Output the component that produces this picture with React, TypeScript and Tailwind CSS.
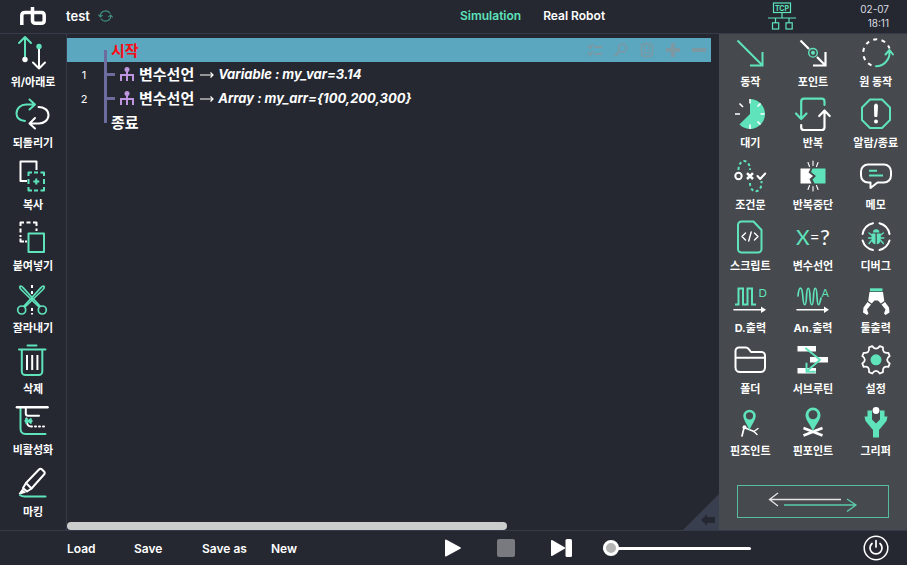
import type { ReactNode } from 'react';

const GREEN = '#5fe3bb';
const WHITE = '#ffffff';

type Item = { label: string; icon: ReactNode };

function gearPath(cx: number, cy: number, teeth: number) {
  const point = (radius: number, degrees: number) => {
    const angle = (degrees * Math.PI) / 180;
    return `${(cx + radius * Math.cos(angle)).toFixed(2)} ${(cy + radius * Math.sin(angle)).toFixed(2)}`;
  };
  const step = 360 / teeth;
  let path = `M${point(14.2, step / 2 - 7)}`;
  for (let i = 0; i < teeth; i += 1) {
    const peak = step / 2 + i * step;
    path += `L${point(14.2, peak + 7)}Q${point(8.6, peak + step / 2)} ${point(14.2, peak + step - 7)}`;
  }
  return `${path}Z`;
}

function Glyph({ children }: { children: ReactNode }) {
  return (
    <svg
      width="40"
      height="40"
      viewBox="0 0 40 40"
      fill="none"
      stroke={WHITE}
      strokeWidth="2"
      strokeLinecap="round"
      strokeLinejoin="round"
      aria-hidden="true"
    >
      {children}
    </svg>
  );
}

const editTools: Item[] = [
  {
    label: '위/아래로',
    icon: (
      <>
        <path d="M12 25V3M6 9l6-6 6 6" stroke={GREEN} />
        <circle cx="12" cy="25.5" r="2.7" fill={WHITE} stroke="none" />
        <path d="M26 13v21M20 28.500l6 6 6-6" />
        <circle cx="26" cy="12.500" r="2.700" fill={GREEN} stroke="none" />
      </>
    ),
  },
  {
    label: '되돌리기',
    icon: (
      <>
        <path d="M12 26C6 26 3.500 22 3.500 18.500C3.500 13 8 9.500 13 9.500H21.500M16.500 4.500l5.500 5-5.500 5" stroke={GREEN} />
        <path d="M25.500 12C31 12 35.500 15 35.500 20C35.500 25 31 28.500 26 28.500H17M22 23l-5.500 5.500 5.500 5" />
      </>
    ),
  },
  {
    label: '복사',
    icon: (
      <>
        <path d="M14 24H7.500V4.500H23.500V13" strokeLinecap="butt" />
        <path
          d="M15.500 19V15.500H19M21 15.500h4M27.500 15.500H31V19M31 22v5M31 30v3.500H27.500M25 33.500h-4M19 33.500H15.500V30M15.500 27v-5"
          stroke={GREEN}
          strokeLinecap="butt"
        />
        <path d="M23.300 21.500v6M20.300 24.500h6" stroke={GREEN} strokeLinecap="butt" />
      </>
    ),
  },
  {
    label: '붙여넣기',
    icon: (
      <>
        <path
          d="M7.500 8V4.500H11M13.500 4.500h4M20 4.500H23.500V8M23.500 10.500V13M7.500 10.500v4M7.500 17v2M7.500 20.500V23.500H11M12 23.500h2"
          strokeLinecap="butt"
        />
        <rect x="15.500" y="15.500" width="15.500" height="18.500" stroke={GREEN} />
      </>
    ),
  },
  {
    label: '잘라내기',
    icon: (
      <>
        <path d="M19 5v3M19 11v3M19 28v3M19 33v1.500" strokeLinecap="butt" />
        <g stroke={GREEN} strokeWidth="1.700">
          <path d="M26 27L8 9.500C6.500 8 6.500 6 7.500 6C9 6 9.500 7 10.500 8.200L20.500 19L27 26" />
          <path d="M12 27L30 9.500C31.500 8 31.500 6 30.500 6C29 6 28.500 7 27.500 8.200L17.500 19L11 26" />
          <circle cx="8.700" cy="30" r="4" />
          <circle cx="29.300" cy="30" r="4" />
        </g>
      </>
    ),
  },
  {
    label: '삭제',
    icon: (
      <>
        <path d="M14.500 4.500h9M6 8.500h26.500M8.800 9v21.500a3.500 3.500 0 0 0 3.500 3.500h13.500a3.500 3.500 0 0 0 3.500-3.500V9" stroke={GREEN} />
        <path d="M14 14v15M19.200 14v15M24.400 14v15" strokeLinecap="butt" />
      </>
    ),
  },
  {
    label: '비활성화',
    icon: (
      <>
        <path d="M7.500 6v20.500c0 3.500 2 5.500 5 5.500H32.500" stroke={GREEN} />
        <path d="M4 5.200h30.500" strokeWidth="2.600" />
        <path d="M12.800 6v5.500c0 1.500 1 2.300 2.300 2.300H26" />
        <path d="M13.500 16.500c.5 5 .5 8 4.500 8h1M22 24.500h1M26 24.500h1M30 24.500h1" />
        <path d="M12.500 16.500l6 5M18.500 16.500l-6 5M11.500 19h8" stroke={GREEN} strokeLinecap="butt" />
      </>
    ),
  },
  {
    label: '마킹',
    icon: (
      <>
        <path d="M13 19L26 5.500c1-1 2-1 3 0l2 2c1 1 1 2 0 3L18.500 24.500z" />
        <path d="M13 19l-3 5 4 3.500 4.500-3" />
        <path d="M9.500 25l-3.500 5 6-1.500z" fill={WHITE} strokeWidth="1" />
        <path d="M7 31c1.500 1.200 2.500 1.500 4.500 1.500H32.500" stroke={GREEN} />
      </>
    ),
  },
];

const commands: Item[] = [
  {
    label: '동작',
    icon: <path d="M7.500 6.500L32.500 31.500M20 31.500H32.500V18" stroke={GREEN} strokeLinecap="butt" strokeLinejoin="miter" />,
  },
  {
    label: '포인트',
    icon: (
      <>
        <path d="M7.500 6.500L16 15M24 23l8.500 8.500M20 31.500H32.500V18" strokeWidth="2.200" strokeLinecap="butt" strokeLinejoin="miter" />
        <circle cx="20" cy="18.800" r="4.300" stroke={GREEN} strokeWidth="1.400" />
        <circle cx="20" cy="18.800" r="2" fill={GREEN} stroke="none" />
      </>
    ),
  },
  {
    label: '원 동작',
    icon: (
      <>
        <path d="M15.500 31.300A13.500 13.500 0 1 1 33.500 14.500" strokeDasharray="4 4.300" strokeLinecap="butt" />
        <path d="M20 32.200A13.500 13.500 0 0 0 33.500 18M29.500 20.500l4-4.500 3.500 4.500" stroke={GREEN} />
      </>
    ),
  },
  {
    label: '대기',
    icon: (
      <>
        <path d="M20 19V4A15 15 0 1 1 9.400 29.600z" fill={GREEN} stroke="none" />
        <g strokeWidth="1.600" strokeLinecap="butt">
          <path d="M5 19h5M9.500 8.500l3.500 3.500M20 4v4.500M20 34v-4.500" />
          <path d="M34.500 19h-4M30.500 8.500l-3 3M30.500 29.500l-3-3" />
        </g>
      </>
    ),
  },
  {
    label: '반복',
    icon: (
      <>
        <path d="M31.500 10V6.500c0-1.800-1-2.800-2.800-2.800H11c-1.800 0-2.800 1-2.800 2.800V23.500M3 18.500l5.200 5.500 5.300-5.500" stroke={GREEN} strokeWidth="2.200" />
        <path d="M8.200 30v2.200c0 1.800 1 2.800 2.800 2.800H28.700c1.800 0 2.800-1 2.800-2.800V15.500M26.200 21l5.300-5.500 5.200 5.500" strokeWidth="2.200" />
      </>
    ),
  },
  {
    label: '알람/종료',
    icon: (
      <>
        <path d="M14 4.500H26L34 12.500V25L26 33H14L6 25V12.500z" stroke={GREEN} />
        <path d="M18.500 10.500c0-2 3-2 3 0l-.6 11h-1.800z" fill={WHITE} strokeWidth="1" />
        <circle cx="20" cy="26.500" r="2" fill={WHITE} stroke="none" />
      </>
    ),
  },
  {
    label: '조건문',
    icon: (
      <>
        <path d="M8.500 13C8.500 1 20 1 20 13M20 26C20 37 31.500 37 31.500 26V24" stroke={GREEN} strokeDasharray="3 2.500" strokeLinecap="butt" />
        <circle cx="8.500" cy="19" r="3.200" />
        <path d="M17 16.200l6 5.800M23 16.200L17 22" strokeWidth="2.500" strokeLinecap="butt" />
        <path d="M27.500 19l2.700 3 5-5.500" />
      </>
    ),
  },
  {
    label: '반복중단',
    icon: (
      <>
        <path d="M7.500 11.500H17.500l-2 4 4.500 3.500-3.500 3 2 4.500H7.500z" fill={WHITE} stroke="none" />
        <path d="M32.500 11.500H19.500l-1.500 3.500 5 4-3.500 3.500 2 4H32.500z" fill={GREEN} stroke="none" />
        <path d="M15 5.500l1.500 4M20 4v4.500M25 5.500l-1.500 4M15 32.500l1.500-4M20 34v-4.500M25 32.500l-1.500-4" strokeWidth="1.100" />
      </>
    ),
  },
  {
    label: '메모',
    icon: (
      <>
        <path d="M12 7.500H28a7 7 0 0 1 7 7v4a7 7 0 0 1-7 7H21.500L14.500 31V25.500H12a7 7 0 0 1-7-7v-4a7 7 0 0 1 7-7z" />
        <path d="M13 13.800h8M13 18.500h14" stroke={GREEN} strokeLinecap="butt" />
      </>
    ),
  },
  {
    label: '스크립트',
    icon: (
      <>
        <path d="M11.500 3.500H23.500L31.500 12V31a3.500 3.500 0 0 1-3.500 3.500H11.500A3.500 3.500 0 0 1 8 31V7a3.500 3.500 0 0 1 3.500-3.500z" stroke={GREEN} />
        <path d="M15.500 15L12 18.500l3.500 3.500M24.500 15L28 18.500l-3.500 3.500M21.200 14l-2.500 9" strokeWidth="1.400" />
      </>
    ),
  },
  {
    label: '변수선언',
    icon: (
      <g stroke="none" fontFamily="Lato, sans-serif" fontWeight="400">
        <text x="3" y="26.500" fill={GREEN} fontSize="21">X</text>
        <text x="17" y="25" fill={WHITE} fontSize="16">=</text>
        <text x="27" y="26.500" fill={WHITE} fontSize="22">?</text>
      </g>
    ),
  },
  {
    label: '디버그',
    icon: (
      <>
        <path d="M6.600 16A13.800 13.800 0 0 1 17 5.300M23.500 5.300A13.800 13.800 0 0 1 33.500 16M33.500 22.500A13.800 13.800 0 0 1 23.500 32M17 32A13.800 13.800 0 0 1 6.600 22.500" />
        <path d="M17 14.500a3.200 3.200 0 0 1 6.400 0z" fill={GREEN} stroke="none" />
        <path d="M15.500 15.500h4v10.800c-3-.6-4-2.300-4-4.800zM20.800 15.500h4v6c0 2.500-1 4.200-4 4.800z" fill={GREEN} stroke="none" />
        <path d="M15.500 17l-2.500-2M15.500 20h-3M15.500 22.500l-2.500 3M24.800 17l2.500-2M24.800 20h3M24.800 22.500l2.500 3" stroke={GREEN} strokeWidth="1.400" />
      </>
    ),
  },
  {
    label: 'D.출력',
    icon: (
      <>
        <path d="M5 24.500H8.500V8.500H13V24.500H17.500V8.500H22V24.500H26" stroke={GREEN} strokeLinecap="butt" strokeLinejoin="miter" />
        <text x="28.500" y="16.500" fill={GREEN} stroke="none" fontFamily="Lato, sans-serif" fontSize="11" fontWeight="400">D</text>
        <path d="M4 29.800h27" strokeWidth="1.600" />
        <path d="M31 26.500l5 3.300-5 3.300z" fill={WHITE} stroke="none" />
      </>
    ),
  },
  {
    label: 'An.출력',
    icon: (
      <>
        <path
          d="M5 16C6 5.500 9 5.500 9.800 16.500S13 27.500 13.500 16.500S16.500 5.500 17 16.500S20 27.500 20.500 16.500S23.500 5.500 24 16.500S26 27 28 18"
          stroke={GREEN}
          strokeWidth="1.700"
        />
        <text x="28.500" y="16.500" fill={GREEN} stroke="none" fontFamily="Lato, sans-serif" fontSize="11" fontWeight="400">A</text>
        <path d="M4 29.800h27" strokeWidth="1.600" />
        <path d="M31 26.500l5 3.300-5 3.300z" fill={WHITE} stroke="none" />
      </>
    ),
  },
  {
    label: '툴출력',
    icon: (
      <>
        <path d="M14 8.300h12.500v3H14z" fill={GREEN} stroke="none" />
        <path d="M13.500 12h13.500l1.300 9-3.500 2.500-2.800-3h-3.500l-2.800 3-3.500-2.500z" fill={WHITE} stroke="none" />
        <path
          d="M11.500 22l3.500 2.500-4 5 1.500 4-1.500 1.500-4-2.500.5-5zM29 22l-3.500 2.500 4 5-1.500 4 1.500 1.500 4-2.500-.5-5z"
          fill={WHITE}
          stroke="none"
        />
      </>
    ),
  },
  {
    label: '폴더',
    icon: (
      <>
        <path d="M5.500 26.500V10a3.500 3.500 0 0 1 3.500-3.500h6.500c1.500 0 2.500.5 3.500 1.800l2 2.700H31.500a3.500 3.500 0 0 1 3.500 3.500V26.500a4.500 4.500 0 0 1-4.500 4.500H10a4.500 4.500 0 0 1-4.500-4.500z" />
        <path d="M6 16.800H34.500" />
      </>
    ),
  },
  {
    label: '서브루틴',
    icon: (
      <>
        <path d="M4.500 5h18.500v5.500H4.500zM17 16h18v5.500H17zM4.500 27h18.500v5.500H4.500z" fill={WHITE} stroke="none" />
        <path d="M13 7.500L27 18.800L13.500 30.500M13.500 22.500V30.800H22" stroke={GREEN} />
      </>
    ),
  },
  {
    label: '설정',
    icon: (
      <>
        <path d={gearPath(20, 18.8, 8)} strokeWidth="1.800" />
        <circle cx="20" cy="18.800" r="5.500" fill={GREEN} stroke="none" />
      </>
    ),
  },
  {
    label: '핀조인트',
    icon: (
      <>
        <path d="M12 33l2-8M14 24.500l10 4" strokeWidth="1.700" />
        <path d="M24 28.500l4-3M24 28.500l3 3" strokeWidth="1.400" />
        <circle cx="14.500" cy="24.300" r="2" fill={WHITE} stroke="none" />
        <path
          d="M19.500 27.500C18 22.500 13.300 17 13.300 13a6.200 6.200 0 0 1 12.400 0C25.700 17 21 22.500 19.500 27.500zM19.500 9.200a3.600 3.600 0 1 0 0 7.200 3.600 3.600 0 0 0 0-7.200z"
          fill={GREEN}
          fillRule="evenodd"
          stroke="none"
        />
      </>
    ),
  },
  {
    label: '핀포인트',
    icon: (
      <>
        <path d="M10.500 25l19 7.500M29.500 25l-19 7.500" strokeWidth="2.600" strokeLinecap="butt" />
        <path
          d="M20 28.500C18.500 23 12.500 17.500 12.500 12a7.500 7.500 0 0 1 15 0C27.500 17.500 21.500 23 20 28.500zM20 7.200a4.500 4.500 0 1 0 0 9 4.500 4.500 0 0 0 0-9z"
          fill={GREEN}
          fillRule="evenodd"
          stroke="none"
        />
      </>
    ),
  },
  {
    label: '그리퍼',
    icon: (
      <>
        <path
          d="M11.500 7.500h4.500v9l4 4 4-4v-9h4.500v6h3l-1 4.500-7.500 9v7.500h-6V27l-7.500-9-1-4.500h3z"
          fill={GREEN}
          stroke="none"
        />
        <circle cx="20" cy="7.500" r="3.400" fill={WHITE} stroke="none" />
      </>
    ),
  },
];

function ToolButton({ item }: { item: Item }) {
  return (
    <button type="button" className="flex min-h-0 min-w-0 flex-1 flex-col items-center gap-px text-[11px] leading-[14px] font-bold">
      <Glyph>{item.icon}</Glyph>
      <span className="whitespace-nowrap">{item.label}</span>
    </button>
  );
}

function Header() {
  return (
    <header className="flex h-[34px] shrink-0 items-center border-b border-[#363b4a] pb-0.5">
      <div className="flex w-[66px] justify-center">
        <svg width="26" height="20" viewBox="0 0 26 20" fill="none" stroke={WHITE} strokeWidth="3.500" role="img" aria-label="rb">
          <path d="M1.800 19V9.500Q1.800 6.500 5 6.500H12.500V14.500Q12.500 17.200 15.500 17.200H21.500Q24.200 17.200 24.200 14.500V9.500Q24.200 6.500 21.500 6.500H12.500V1" />
        </svg>
      </div>
      <div className="flex w-[394px] items-center gap-2">
        <h1 className="text-[13px] leading-4 font-semibold">test</h1>
        <button type="button" aria-label="refresh">
          <svg width="15" height="14" viewBox="0 0 15 14" fill="none" stroke="#42917f" strokeWidth="1.200" strokeLinecap="round">
            <path d="M2.300 7.500A5.300 5.300 0 0 1 11.800 4M12.700 6.500A5.300 5.300 0 0 1 3.200 10M.7 6l1.600 2 2-1.600M14.300 8l-1.600-2-2 1.600" />
          </svg>
        </button>
      </div>
      <nav className="flex gap-[22px] text-[12px] leading-4 font-semibold">
        <button type="button" className="text-[#5fe3bb]">Simulation</button>
        <button type="button">Real Robot</button>
      </nav>
      <div className="ml-auto flex items-center pr-[18px]">
        <svg width="28" height="28" viewBox="0 0 28 28" fill="none" stroke={GREEN} strokeWidth="1.200">
          <rect x="5.500" y="1" width="17" height="9.500" />
          <text x="14" y="8.600" textAnchor="middle" fill={GREEN} stroke="none" fontFamily="Inter, sans-serif" fontSize="7" fontWeight="700">TCP</text>
          <path d="M14 10.500V16M0 16h28M7.500 16v5M21 16v5" />
          <rect x="4.500" y="20.800" width="6.200" height="6.200" />
          <rect x="18" y="20.800" width="6.200" height="6.200" />
        </svg>
        <div className="w-[93px] text-right text-[10px] leading-[14px] text-[#dcdde0]">
          <div>02-07</div>
          <div>18:11</div>
        </div>
      </div>
    </header>
  );
}

function RowTools() {
  const shape = 'h-[14px] w-[14px]';
  return (
    <div className="ml-auto flex gap-3 pr-[5px] pb-px text-[#7b98a3]">
      <button type="button" aria-label="select">
        <svg className={shape} viewBox="0 0 14 14" fill="none" stroke="currentColor" strokeWidth="2">
          <path d="M0 3l2 2 3-4M0 10l2 2 3-4M6.500 4H14M6.500 11H14" />
        </svg>
      </button>
      <button type="button" aria-label="search">
        <svg className={shape} viewBox="0 0 14 14" fill="none" stroke="currentColor" strokeWidth="1.600">
          <circle cx="8.500" cy="5" r="4" />
          <path d="M5.500 8L1 13" strokeWidth="2.200" />
        </svg>
      </button>
      <button type="button" aria-label="info">
        <svg className={shape} viewBox="0 0 14 14" fill="none" stroke="currentColor" strokeWidth="1.500">
          <rect x="1.500" y=".8" width="11" height="12.500" rx="3" />
          <path d="M4 4h2M8 4h2M4 7h2M8 7h2M4 10h6" />
        </svg>
      </button>
      <button type="button" aria-label="expand">
        <svg className={shape} viewBox="0 0 14 14" stroke="currentColor" strokeWidth="4">
          <path d="M7 0v14M0 7h14" />
        </svg>
      </button>
      <button type="button" aria-label="collapse">
        <svg className={shape} viewBox="0 0 14 14" stroke="currentColor" strokeWidth="4">
          <path d="M0 7h14" />
        </svg>
      </button>
    </div>
  );
}

function VariableRow({ line, value }: { line: number; value: string }) {
  return (
    <li className="flex h-6 items-center">
      <span className="mr-[3px] w-[34px] pt-0.5 text-center text-[11px]">{line}</span>
      <span className="h-6 w-[3px] bg-[#6c6c9e]" />
      <span className="mr-[5px] h-[3px] w-2 bg-[#6c6c9e]" />
      <svg width="14" height="14" viewBox="0 0 14 14" fill="none" stroke="#bf95df" strokeWidth="2">
        <circle cx="7" cy="2.500" r="2.500" fill="#bf95df" stroke="none" />
        <path d="M7 3v11M1 14V8H13V14" />
      </svg>
      <span className="ml-[5px] pt-0.5 text-[15px] font-semibold">변수선언</span>
      <svg className="mr-1 ml-[6px]" width="14" height="8" viewBox="0 0 14 8" fill="none" stroke={WHITE} strokeWidth="1.200">
        <path d="M0 5h13M10.500 2.500L13 5l-2.500 2.500" />
      </svg>
      <em className="pt-0.5 text-[13px] font-bold">{value}</em>
    </li>
  );
}

function Program() {
  return (
    <main className="relative flex min-w-0 flex-1 flex-col pt-1">
      <ol className="mr-2 flex-1">
        <li className="flex h-6 items-center bg-[#5aa7bf]">
          <span className="ml-[37px] h-3 w-[3px] self-end bg-[#6c6c9e]" />
          <span className="ml-1 pt-0.5 text-[15px] font-semibold text-[#ff0a14]">시작</span>
          <RowTools />
        </li>
        <VariableRow line={1} value="Variable : my_var=3.14" />
        <VariableRow line={2} value="Array : my_arr={100,200,300}" />
        <li className="flex h-6 items-center">
          <span className="ml-[37px] h-[13px] w-[3px] self-start bg-[#6c6c9e]" />
          <span className="ml-1 pt-0.5 text-[15px] font-semibold">종료</span>
        </li>
      </ol>
      <div className="mr-2 h-2">
        <div className="h-2 w-[68.4%] rounded-full bg-[#cbcccc]" />
      </div>
      <button
        type="button"
        aria-label="back"
        className="absolute right-0 bottom-0 flex h-9 w-9 items-end justify-end bg-[#3a3f4f] pr-1 pb-1 [clip-path:polygon(100%_0,100%_100%,0_100%)]"
      >
        <svg width="14" height="12" viewBox="0 0 14 12" fill="#252831">
          <path d="M0 6l6-6v3h8v6H6v3z" />
        </svg>
      </button>
    </main>
  );
}

function Footer() {
  return (
    <footer className="flex h-[35px] shrink-0 items-center border-t border-[#363b4a] pl-[67px] pr-[18px]">
      <nav className="flex w-[378px] pt-px text-left text-[12px] leading-4 font-semibold">
        <button type="button" className="w-[67px] text-left">Load</button>
        <button type="button" className="w-[68px] text-left">Save</button>
        <button type="button" className="w-[69px] text-left">Save as</button>
        <button type="button">New</button>
      </nav>
      <div className="flex items-center gap-9">
        <button type="button" aria-label="play">
          <svg width="16" height="18" viewBox="0 0 16 18" fill={WHITE}>
            <path d="M0 1.500Q0 0 1.500.7L15.300 8.200Q16.500 9 15.300 9.800L1.500 17.300Q0 18 0 16.500z" />
          </svg>
        </button>
        <button type="button" aria-label="stop" className="h-[18px] w-[18px] rounded-[2px] bg-[#797a7f]" />
        <button type="button" aria-label="next step">
          <svg width="21" height="18" viewBox="0 0 21 18" fill={WHITE}>
            <path d="M0 2Q0 .5 1.500 1.300L14 8.500V9.500L1.500 16.700Q0 17.500 0 16z" />
            <rect x="14.500" y="0" width="6.500" height="18" rx="1.500" />
          </svg>
        </button>
      </div>
      <input
        type="range"
        aria-label="speed"
        min={0}
        max={100}
        defaultValue={0}
        className="ml-[31px] h-4 w-[148px] appearance-none bg-transparent [&::-webkit-slider-runnable-track]:h-[3px] [&::-webkit-slider-runnable-track]:rounded-full [&::-webkit-slider-runnable-track]:bg-white [&::-webkit-slider-thumb]:-mt-[7px] [&::-webkit-slider-thumb]:h-4 [&::-webkit-slider-thumb]:w-4 [&::-webkit-slider-thumb]:appearance-none [&::-webkit-slider-thumb]:rounded-full [&::-webkit-slider-thumb]:border-[3px] [&::-webkit-slider-thumb]:border-white [&::-webkit-slider-thumb]:bg-[#b3b3b3]"
      />
      <button type="button" aria-label="power" className="ml-auto">
        <svg width="26" height="26" viewBox="0 0 26 26" fill="none" stroke={WHITE} strokeWidth="1.700" strokeLinecap="round">
          <circle cx="13" cy="13" r="11.800" strokeWidth="1.500" />
          <path d="M9 8.500a6 6 0 1 0 8 0M13 5.500v6.500" />
        </svg>
      </button>
    </footer>
  );
}

export default function App() {
  return (
    <div className="flex h-screen flex-col overflow-hidden bg-[#252831] font-[Inter,'Noto_Sans_CJK_KR',sans-serif] text-white">
      <Header />
      <div className="flex min-h-0 flex-1">
        <aside className="flex w-[67px] shrink-0 flex-col border-r border-[#363b4a] pb-[5px]">
          {editTools.map((item) => (
            <ToolButton key={item.label} item={item} />
          ))}
        </aside>
        <Program />
        <aside className="flex w-[188px] shrink-0 flex-col bg-[#46494d]">
          <div className="grid min-h-0 flex-1 grid-cols-3 grid-rows-7">
            {commands.map((item) => (
              <ToolButton key={item.label} item={item} />
            ))}
          </div>
          <div className="h-[66px] pt-[21px] pr-[18px] pl-[18px]">
            <button type="button" aria-label="switch page" className="flex h-[33px] w-full items-center justify-center border border-[#57bd9f]">
              <svg width="90" height="20" viewBox="0 0 90 20" fill="none" strokeWidth="1.300">
                <path d="M73 7.500H1.500M10 1L1.500 7.500L10 14" stroke="#e3e4e5" />
                <path d="M16 13H88M79 7L88 13L79 19.500" stroke="#5acbaa" />
              </svg>
            </button>
          </div>
        </aside>
      </div>
      <Footer />
    </div>
  );
}
